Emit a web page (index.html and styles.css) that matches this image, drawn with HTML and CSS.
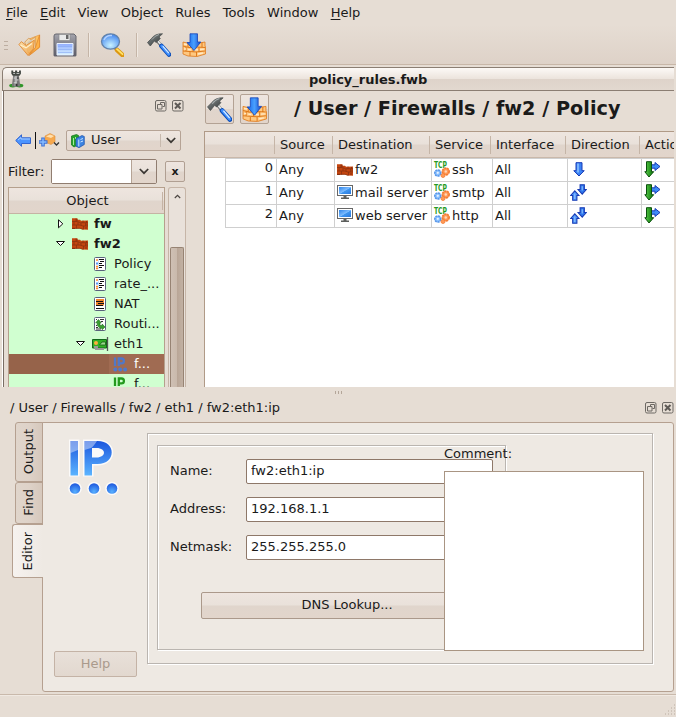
FILE: index.html
```html
<!DOCTYPE html>
<html lang="en">
<head>
<meta charset="utf-8">
<title>policy_rules.fwb</title>
<link rel="stylesheet" href="styles.css">
</head>
<body>
<svg class="sprite" width="0" height="0">
  <defs>
    <linearGradient id="blue" x1="0" y1="0" x2="0" y2="1"><stop offset="0" stop-color="#1c57de"/><stop offset="1" stop-color="#5bb4ff"/></linearGradient>
    <linearGradient id="blueH" x1="0" y1="0" x2="1" y2="0"><stop offset="0" stop-color="#1463e8"/><stop offset=".5" stop-color="#49a0ff"/><stop offset="1" stop-color="#1447c8"/></linearGradient>
    <linearGradient id="green" x1="0" y1="0" x2="1" y2="0"><stop offset="0" stop-color="#5bd04a"/><stop offset="1" stop-color="#087008"/></linearGradient>
    <linearGradient id="gold" x1="0" y1="0" x2="1" y2="1"><stop offset="0" stop-color="#ffe2a4"/><stop offset="1" stop-color="#f6982c"/></linearGradient>
    <linearGradient id="steel" x1="0" y1="0" x2="1" y2="1"><stop offset="0" stop-color="#8c9292"/><stop offset="1" stop-color="#2b3030"/></linearGradient>
    <linearGradient id="floppy" x1="0" y1="0" x2="0" y2="1"><stop offset="0" stop-color="#a5a5ad"/><stop offset="1" stop-color="#5b5b68"/></linearGradient>
    <linearGradient id="label" x1="0" y1="0" x2="0" y2="1"><stop offset="0" stop-color="#8fabff"/><stop offset="1" stop-color="#d8f2ff"/></linearGradient>
    <radialGradient id="lens" cx=".5" cy=".75" r=".75"><stop offset="0" stop-color="#c8f2ff"/><stop offset="1" stop-color="#3f82ee"/></radialGradient>
    <radialGradient id="ball" cx=".5" cy=".8" r=".8"><stop offset="0" stop-color="#57b0ff"/><stop offset="1" stop-color="#1b55dd"/></radialGradient>
    <linearGradient id="screen" x1="0" y1="0" x2="1" y2="1"><stop offset="0" stop-color="#2d83e8"/><stop offset=".5" stop-color="#7dbcff"/><stop offset=".55" stop-color="#3f96f0"/><stop offset="1" stop-color="#2a78dd"/></linearGradient>
  </defs>
  <symbol id="i-open" viewBox="0 0 24 24">
    <path d="M11 6l11.500-4.500v13L13 22z" fill="#ffc05c" stroke="#e59a44" stroke-width=".8"/>
    <path d="M7 9l4-4 3 1.500 4-3v12l-7 5z" fill="#efd6ae" stroke="#d49a58" stroke-width=".9"/>
    <path d="M10 9l4-2.500v10l-4 3z" fill="#cfc6b6"/>
    <path d="M1 11.500L3.500 8.500l5 4L17 7l-1 9-5.500 7z" fill="url(#gold)" fill-opacity=".8" stroke="#e08830" stroke-width=".9"/>
    <path d="M22.500 1.500v12.500L11.500 23l6.500-8z" fill="#ffb246" stroke="#e08830" stroke-width=".8"/>
    <path d="M2.500 12l6 3 6-4.500" fill="none" stroke="#fff0cc" stroke-width="1.200"/>
  </symbol>
  <symbol id="i-save" viewBox="0 0 24 24">
    <path d="M3 1h18l2 2v19.500q0 .5-.5.5h-21q-.5 0-.5-.5V3q0-2 2-2z" fill="url(#floppy)" stroke="#66666e"/>
    <path d="M6 1.500h11v5q0 1-1 1H7q-1 0-1-1z" fill="#e9e9e9" stroke="#888" stroke-width=".6"/>
    <path d="M13 2h2.500v4H13z" fill="#666"/>
    <path d="M4 10.500h16V22H4z" fill="url(#label)" stroke="#e9f2ff"/>
    <path d="M5 13.500h14M5 16.500h14M5 19.500h14" stroke="#86a8f4" stroke-width=".6"/>
  </symbol>
  <symbol id="i-find" viewBox="0 0 24 24">
    <path d="M15 15l3 3" stroke="#777" stroke-width="3"/>
    <path d="M17 17l5.500 5" stroke="#dd9812" stroke-width="4.500" stroke-linecap="round"/>
    <path d="M17 16.200l5.500 5" stroke="#ffe36c" stroke-width="1.800" stroke-linecap="round"/>
    <ellipse cx="10.500" cy="8.500" rx="9" ry="7.700" fill="url(#lens)" stroke="#6483a8" stroke-width="1.300"/>
    <path d="M4 7q2-5 8-4.500" stroke="#b2d2ff" stroke-width="1.500" fill="none"/>
  </symbol>
  <symbol id="i-hammer" viewBox="0 0 24 24">
    <path d="M9.500 7l5 6" stroke="#666" stroke-width="3"/><path d="M10 7l5 6" stroke="#e4e8e8" stroke-width="1.800"/>
    <path d="M14.500 13l7.500 8.500" stroke="#0b4bb4" stroke-width="4.600" stroke-linecap="round"/>
    <path d="M14.800 13l7 8.200" stroke="#3f8fff" stroke-width="3" stroke-linecap="round"/>
    <path d="M15.800 13.200l6 7" stroke="#d8edff" stroke-width="1.200"/>
    <path d="M.5 9.500L4.500 5.500Q8 .5 15.500.8l-3.500 3.200 1.300 1.500-4 4-2-1.500-4 5z" fill="url(#steel)" stroke="#434949" stroke-width=".7"/>
    <path d="M5 6.500q3-4 7-5" stroke="#a7afaf" fill="none"/>
  </symbol>
  <symbol id="i-install" viewBox="0 0 24 24">
    <path d="M1 9l6 1.500h8l8-1.500v4l.5 1v7L15 23.500l-9-.5L1 21z" fill="#ffc880" stroke="#de7a1c" stroke-width=".8"/>
    <path d="M1 13l6 1.500 8-.5 8 .5M1 18l13 1 9-1M6 9.500V14M4 14v4M11 14.500v4.500M17 14v5M20 9v5M8 19v4M14.500 19v4" stroke="#de7a1c" stroke-width="1" fill="none"/>
    <path d="M2 11l3 .5M2 16h2M6 16.500l3 .3M12 16.500l4 .3M18 16.500l4-.3M16 21l5-1" stroke="#ffe9c6" stroke-width="1.300"/>
    <path d="M8 .8h7.500V9h3.300L12 17.500 5 9.500h3z" fill="url(#blueH)" stroke="#1744b8" stroke-width=".8"/>
  </symbol>
  <symbol id="i-tower" viewBox="0 0 16 18">
    <ellipse cx="4" cy="16" rx="3.800" ry="2" fill="#2f9628"/><ellipse cx="11.500" cy="16" rx="3.800" ry="2" fill="#2f9628"/>
    <path d="M4.500 5h6l1.500 12H3z" fill="#777"/><path d="M6 5h2.500v12H6z" fill="#b5b5b5"/>
    <path d="M2.500 0h2v1.500h2V0h2.200v1.500h2V0h2v3.500L11.200 5.500h-7.200l-1.500-2z" fill="#414641"/>
    <path d="M4.500 3h2M8 3h3M5 8h2M8 10h2M5 13h3" stroke="#d2d2d2"/><path d="M7 14h2v3H7zM9 7h1v2H9z" fill="#333"/>
  </symbol>
  <symbol id="i-float" viewBox="0 0 12 12">
    <rect x=".5" y=".5" width="10.500" height="10.500" rx="1.500" fill="none" stroke="#6d6964"/>
    <path d="M5.500 4.500V2.500h4v4h-2M2.500 4.500h4.500v4.500H2.500z" fill="none" stroke="#6d6964"/>
  </symbol>
  <symbol id="i-close" viewBox="0 0 12 12">
    <rect x=".5" y=".5" width="10.500" height="10.500" rx="1.500" fill="none" stroke="#6d6964"/>
    <path d="M3 3l5.500 5.500M8.500 3L3 8.500" stroke="#5e5a56" stroke-width="2"/>
  </symbol>
  <symbol id="i-back" viewBox="0 0 16 13"><path d="M.7 6.500L6.500.8v3H15.500v5.700h-9v2.800z" fill="#4b94ff" stroke="#3465cf"/><path d="M3 6l3-2.500V5h9" fill="none" stroke="#a9cdff"/></symbol>
  <symbol id="i-newobj" viewBox="0 0 21 15">
    <path d="M6 3l5-2.500L16 3v6l-4 2.500L6 9z" fill="#f6a84e" stroke="#dd9140" stroke-width=".6"/><path d="M7 3.500l4-2 4 1.500-3 2z" fill="#ffe0ae"/>
    <path d="M4 4.500v9M-.5 9h9" stroke="#3a70d6" stroke-width="3.500"/><path d="M4 5.500v7M.5 9h7" stroke="#86bbff" stroke-width="1.500"/>
    <path d="M15 9.500l2.500 2.500L20 9.500" stroke="#333" stroke-width="1.300" fill="none"/>
  </symbol>
  <symbol id="i-books" viewBox="0 0 14 14">
    <path d="M.5 2l5-1.500 2 1v9L3 13 .5 11z" fill="#24a22a" stroke="#137218" stroke-width=".7"/><path d="M2.500 4v7M4.500 3v2" stroke="#a5eb9b"/>
    <path d="M5 4.500L11 1.500l2.300 1v8L8 13.700l-3-1.500z" fill="#3c83e2" stroke="#1c4fa8" stroke-width=".7"/><path d="M7.800 5.500v7M9.500 5.500l2.500-1M9.500 8l2.500-1" stroke="#cce5ff"/>
  </symbol>
  <symbol id="i-chev" viewBox="0 0 10 7"><path d="M.8 1l4.200 4.200L9.200 1" fill="none" stroke="#3b3733" stroke-width="1.700"/></symbol>
  <symbol id="i-up" viewBox="0 0 7 5"><path d="M.8 4l2.700-2.700L6.200 4" fill="none" stroke="#4c4642" stroke-width="1.200"/></symbol>
  <symbol id="i-tri-r" viewBox="0 0 10 10"><path d="M2.500 .8v8L6.800 4.800z" fill="#fff" stroke="#111"/></symbol>
  <symbol id="i-tri-d" viewBox="0 0 10 10"><path d="M.5 2.500h8L4.500 6.500z" fill="#fff" stroke="#111"/></symbol>
  <symbol id="i-wall" viewBox="0 0 16 12">
    <path d="M0 .3h5.500v1.500H8l1 1 7-.3v9.200l-5-.2-3-1-8 .2z" fill="#c4450f"/>
    <path d="M0 3.500h5.500l3 1.200h7.500M0 7h8l3 1h5M0 10.300h8l3 1M4 .5v3M2 3.500V7M6 4v3M11 2.500v2.200M9 5v2.300M13.500 5v3M4.500 7v3.500M11.500 8v3.500" stroke="#8a3210" stroke-width=".8" fill="none"/>
    <path d="M14.500 3v1.500M15 5.500v2M14 9v2M5 1v2M0 10.500h3" stroke="#7d2c0e" stroke-width=".8"/>
  </symbol>
  <symbol id="i-policy" viewBox="0 0 12 14"><rect x=".5" y=".5" width="11" height="13" rx="1" fill="#fff" stroke="#59627b"/><path d="M4.500 2v10" stroke="#cfe4ff"/><path d="M2 3h2M2 9.500h2M2 11.500h2" stroke="#ff8a2a" stroke-width="1.600"/><path d="M2 6.500h2" stroke="#569af3" stroke-width="2"/><path d="M5 2.500h5M6 4.500h4M5 6.500h3M5 8.500h5M5 10.500h3" stroke="#111"/></symbol>
  <symbol id="i-nat" viewBox="0 0 12 14"><rect x=".5" y=".5" width="11" height="13" rx="1" fill="#fff" stroke="#59627b"/><path d="M2 2h8v6.500H2z" fill="#f0842a"/><path d="M2 4.500h7M4 6.500h6M2 8.500h7M2 11.500h8" stroke="#111"/></symbol>
  <symbol id="i-routing" viewBox="0 0 12 14"><rect x=".5" y=".5" width="11" height="13" rx="1" fill="#fff" stroke="#59627b"/><path d="M6 2.500h4M2 8.500h1M2 10.500h2M7 4.500h2M2 2.500h1M2 12h5" stroke="#333"/><path d="M1.700 5.800L4.500 2.500l2.700 3.300H6V8.500h2.200V7L11 10l-2.800 2.700V11.300H6L3.300 8.500V5.800z" fill="#3aa030" stroke="#1a6d18" stroke-width=".6"/></symbol>
  <symbol id="i-nic" viewBox="0 0 17 14"><path d="M15.500 0v14" stroke="#555" stroke-width="1.300"/><path d="M.5 2.500h14v8.500H.5z" fill="#31b026" stroke="#12661a"/><circle cx="4" cy="6" r="2" fill="#ffaf3c"/><path d="M7.500 8l2.500-3h3.500v3z" fill="#9bd98e" stroke="#175c17" stroke-width=".8"/><path d="M2 10h4M3 12h9" stroke="#999" stroke-width="1.800"/></symbol>
  <symbol id="i-ip" viewBox="0 0 15 15"><path d="M2 .5V9M5.800 9V1.500h2.700a2.200 2.200 0 010 4.800h-2.500" fill="none" stroke="currentColor" stroke-width="2.300"/><circle cx="2.300" cy="12.500" r="2" fill="currentColor"/><circle cx="7.200" cy="12.500" r="2" fill="currentColor"/><circle cx="12.100" cy="12.500" r="2" fill="currentColor"/></symbol>
  <symbol id="i-host" viewBox="0 0 16 14"><rect x=".5" y=".5" width="15" height="10" fill="#fff" stroke="#666"/><path d="M2 2h12v7H2z" fill="url(#screen)"/><path d="M6.500 11h3v1.500h2.500V14H4v-1.500h2.500z" fill="#5d5f5d"/></symbol>
  <symbol id="i-tcp" viewBox="0 0 16 17" overflow="visible">
    <text x="0" y="7" class="tcp" textLength="13" lengthAdjust="spacingAndGlyphs">TCP</text>
    <circle cx="3.800" cy="12" r="3" fill="#8cc2ff" stroke="#5a98ea" stroke-width="1.600" stroke-dasharray="2.200 .6"/><circle cx="3.800" cy="11.800" r="1.100" fill="#e8f3ff"/>
    <circle cx="11.800" cy="10.500" r="3.400" fill="#ff9a58" stroke="#f47c34" stroke-width="1.600" stroke-dasharray="2.200 .6"/><circle cx="11.800" cy="10.500" r="1.200" fill="#ffd8ba"/>
    <circle cx="9" cy="14.500" r="2" fill="#ff9a58" stroke="#f47c34" stroke-width=".8"/>
  </symbol>
  <symbol id="i-down" viewBox="0 0 12 15"><path d="M3 .7h6v8h2.200L6 14 .8 8.700H3z" fill="#3b82f5" stroke="#173bb5"/><path d="M5 1.500v9" stroke="#91c5ff" stroke-width="1.500"/></symbol>
  <symbol id="i-both" viewBox="0 0 16 16"><path d="M9.500.7h4v4.500h1.900L11.500 9.500 7.600 5.200h1.900z" fill="#2f78ee" stroke="#173bb5"/><path d="M2.500 15.300h4v-4.500h1.900L4.500 6.500.6 10.800h1.900z" fill="#4c93f8" stroke="#173bb5"/><path d="M4.500 9v5M11.500 2v4" stroke="#93c5ff"/></symbol>
  <symbol id="i-accept" viewBox="0 0 17 17"><path d="M5 3.800h6V1.500l5 4-5 4V7.200H6z" fill="#3e8bf6" stroke="#173bb5"/><path d="M2.500.7h5v10h2.200L5 16 .8 10.700h1.700z" fill="url(#green)" stroke="#0a4f0c"/></symbol>
</svg>

<nav class="menubar">
  <span><u>F</u>ile</span><span><u>E</u>dit</span><span>View</span><span>Object</span><span>Rules</span><span>Tools</span><span>Window</span><span><u>H</u>elp</span>
</nav>

<div class="toolbar">
  <div class="handle"><i></i><i></i><i></i></div>
  <svg class="t-open"><use href="#i-open"/></svg>
  <svg class="t-save"><use href="#i-save"/></svg>
  <div class="sep"></div>
  <svg class="t-find"><use href="#i-find"/></svg>
  <div class="sep"></div>
  <svg class="t-hammer"><use href="#i-hammer"/></svg>
  <svg class="t-install"><use href="#i-install"/></svg>
</div>

<section class="document">
  <header class="titlebar"><svg class="tower"><use href="#i-tower"/></svg><b>policy_rules.fwb</b></header>
  <div class="workspace">
    <aside class="dock">
      <div class="dock-buttons"><svg><use href="#i-float"/></svg><svg><use href="#i-close"/></svg></div>
      <div class="library">
        <svg class="back"><use href="#i-back"/></svg><div class="caret"></div><svg class="newobj"><use href="#i-newobj"/></svg>
        <div class="select bevel"><svg class="books"><use href="#i-books"/></svg><span>User</span><div class="select-arrow"><svg class="chev"><use href="#i-chev"/></svg></div></div>
      </div>
      <div class="filter">
        <span>Filter:</span>
        <div class="combo"><div class="combo-text"></div><div class="combo-arrow bevel"><svg class="chev"><use href="#i-chev"/></svg></div></div>
        <button class="clear bevel">x</button>
      </div>
      <div class="tree-area">
        <div class="tree">
          <div class="tree-head bevel"><span>Object</span></div>
          <div class="node l1"><svg class="tri"><use href="#i-tri-r"/></svg><svg class="wall"><use href="#i-wall"/></svg><b>fw</b></div>
          <div class="node l1"><svg class="tri"><use href="#i-tri-d"/></svg><svg class="wall"><use href="#i-wall"/></svg><b>fw2</b></div>
          <div class="node l2"><svg class="page"><use href="#i-policy"/></svg><span>Policy</span></div>
          <div class="node l2"><svg class="page"><use href="#i-policy"/></svg><span>rate_...</span></div>
          <div class="node l2"><svg class="page"><use href="#i-nat"/></svg><span>NAT</span></div>
          <div class="node l2"><svg class="page"><use href="#i-routing"/></svg><span>Routi...</span></div>
          <div class="node l2b"><svg class="tri"><use href="#i-tri-d"/></svg><svg class="nic"><use href="#i-nic"/></svg><span>eth1</span></div>
          <div class="node l3 selected"><svg class="ip"><use href="#i-ip"/></svg><span>f...</span></div>
          <div class="node l3"><svg class="ip green"><use href="#i-ip"/></svg><span>f...</span></div>
        </div>
        <div class="scrollbar"><svg><use href="#i-up"/></svg><div class="thumb"></div></div>
      </div>
    </aside>
    <main class="rules">
      <div class="rules-head">
        <div class="tool bevel"><svg><use href="#i-hammer"/></svg></div>
        <div class="tool bevel"><svg><use href="#i-install"/></svg></div>
        <h1>/ User / Firewalls / fw2 / Policy</h1>
      </div>
      <div class="grid">
        <div class="grid-head bevel"><span></span><span>Source</span><span>Destination</span><span>Service</span><span>Interface</span><span>Direction</span><span>Action</span></div>
        <div class="row"><span class="num">0</span><span>Any</span><span><svg class="wall"><use href="#i-wall"/></svg>fw2</span><span><svg class="tcpicon"><use href="#i-tcp"/></svg>ssh</span><span>All</span><span><svg class="down"><use href="#i-down"/></svg></span><span><svg class="accept"><use href="#i-accept"/></svg></span></div>
        <div class="row"><span class="num">1</span><span>Any</span><span><svg class="host"><use href="#i-host"/></svg>mail server</span><span><svg class="tcpicon"><use href="#i-tcp"/></svg>smtp</span><span>All</span><span><svg class="both"><use href="#i-both"/></svg></span><span><svg class="accept"><use href="#i-accept"/></svg></span></div>
        <div class="row"><span class="num">2</span><span>Any</span><span><svg class="host"><use href="#i-host"/></svg>web server</span><span><svg class="tcpicon"><use href="#i-tcp"/></svg>http</span><span>All</span><span><svg class="both"><use href="#i-both"/></svg></span><span><svg class="accept"><use href="#i-accept"/></svg></span></div>
      </div>
    </main>
  </div>
</section>

<div class="splitter"><i></i><i></i><i></i></div>
<div class="editor-title"><span>/ User / Firewalls / fw2 / eth1 / fw2:eth1:ip</span><div class="dock-buttons"><svg><use href="#i-float"/></svg><svg><use href="#i-close"/></svg></div></div>

<section class="editor">
  <div class="tabs">
    <div class="tab output"><span>Output</span></div>
    <div class="tab find"><span>Find</span></div>
    <div class="tab active"><span>Editor</span></div>
  </div>
  <div class="pane">
    <div class="side">
      <svg class="ip-logo" viewBox="0 0 54 58">
        <g stroke="#fff" stroke-width="3" fill="#fff" opacity=".8"><path d="M3.500 1h7.500v34H3.500zM17.500 1h13c19 0 19 23 0 23h-5.500v11h-7.500z"/><circle cx="8" cy="48.500" r="5.300"/><circle cx="27" cy="48.500" r="5.300"/><circle cx="45" cy="48.500" r="5.300"/></g>
        <path d="M3.500 1H11v34.500H3.500z" fill="url(#blue)"/><path d="M17.500 1h13c19 0 19 23 0 23h-5.500v11.500h-7.500zM25 8v9.500h4.500c10 0 10-9.500 0-9.500z" fill="url(#blue)" fill-rule="evenodd"/>
        <path d="M3.500 1H11v9l-7.500 3zM17.500 1h12.500q-4 6-6 7l-6.500 2z" fill="#fff" opacity=".42"/>
        <circle cx="8" cy="48.500" r="5.300" fill="url(#ball)"/><circle cx="27" cy="48.500" r="5.300" fill="url(#ball)"/><circle cx="45" cy="48.500" r="5.300" fill="url(#ball)"/>
      </svg>
      <button class="help">Help</button>
    </div>
    <div class="frame outer">
      <div class="frame inner">
        <label><span>Name:</span><input value="fw2:eth1:ip"></label>
        <label><span>Address:</span><input value="192.168.1.1"></label>
        <label><span>Netmask:</span><input value="255.255.255.0"></label>
        <button class="lookup bevel">DNS Lookup...</button>
      </div>
      <div class="comment"><span>Comment:</span><textarea></textarea></div>
    </div>
  </div>
</section>

<footer class="status">
  <svg class="grip" viewBox="0 0 12 12"><path d="M10 1h1M7 4h1M10 4h1M4 7h1M7 7h1M10 7h1M1 10h1M4 10h1M7 10h1M10 10h1" stroke="#b9aca0"/></svg>
</footer>
</body>
</html>
```
FILE: styles.css
```css
* { box-sizing: border-box; }
body {
  margin: 0; width: 676px; height: 717px; overflow: hidden;
  display: flex; flex-direction: column;
  background: #e6ddd4; color: #1a1a1a;
  font: 13px/16px "DejaVu Sans", sans-serif;
}
svg { display: block; flex: none; overflow: visible; }
.sprite { position: absolute; }
button, input, textarea { font: inherit; color: inherit; outline: none; padding: 0; margin: 0; }
.bevel { background: linear-gradient(#eee5df, #e9e1da 49%, #e0d5cc 51%, #e2d5cb); }
.tcp { font: bold 8px "DejaVu Sans", sans-serif; fill: #259a22; }

.menubar { height: 25px; flex: none; display: flex; gap: 12.3px; padding: 5px 6px 0; }
.menubar u { text-underline-offset: 2px; }

.toolbar { height: 40px; flex: none; display: flex; align-items: center; background: linear-gradient(#e6ddd4, #ded2c8); border-bottom: 1px solid #c8b7a8; }
.handle { display: flex; flex-direction: column; gap: 3px; margin: 1px 10px 0 4px; }
.handle i { width: 4px; height: 1px; background: #bdaea1; }
.t-open, .t-save, .t-find, .t-hammer, .t-install { width: 24px; height: 24px; }
.t-open { width: 23px; margin-right: 11px; }
.t-save { margin: 0 11px 0 1px; }
.sep { width: 1px; height: 24px; background: #c5b5a7; box-shadow: 1px 0 #f0e9e2; }
.t-find { margin: 0 12px 0 11px; }
.t-hammer { margin: 0 11px 0 10px; }

.document { height: 320px; flex: none; margin: 2px 2px 0; overflow: hidden; }
.titlebar {
  height: 24px; display: flex; align-items: center; padding-left: 6px;
  border: 1px solid #8b7e73; border-width: 1px 0 1px 1px; border-radius: 5px 0 0;
  background: linear-gradient(#fcf9f6, #ece4dd 48%, #ded3ca 52%, #e2d8cf);
}
.tower { width: 15px; height: 18px; }
.titlebar b { margin: 1px 0 0 285px; }
.workspace { height: 296px; display: flex; border-left: 1px solid #fff; box-shadow: inset 1px 0 #796d64; }
.dock { width: 201px; flex: none; padding-left: 5px; }
.dock-buttons { display: flex; gap: 5px; }
.dock-buttons svg { width: 12px; height: 12px; }
.dock .dock-buttons { padding: 9px 0 0 147px; height: 39px; }
.library { height: 21px; display: flex; align-items: center; padding-left: 7px; }
.back { width: 16px; height: 13px; }
.caret { width: 1px; height: 17px; background: #111; margin: 0 3px 0 4px; }
.newobj { width: 21px; height: 15px; }
.select { width: 115px; height: 21px; margin-left: 6px; display: flex; align-items: center; border: 1px solid #b5a395; border-radius: 2px; }
.select span { margin-top: -2px; }
.books { width: 14px; height: 14px; margin: 0 6px 0 4px; }
.select-arrow { margin-left: auto; width: 20px; height: 13px; border-left: 1px solid #c7b9ad; display: flex; align-items: center; justify-content: center; }
.chev { width: 10px; height: 7px; }
.filter { height: 25px; margin-top: 8px; display: flex; align-items: center; }
.filter > span { width: 43px; }
.combo { display: flex; width: 106px; height: 25px; border: 1px solid #907d70; border-radius: 2px; }
.combo-text { flex: 1; background: #fff; }
.combo-arrow { width: 25px; border-left: 1px solid #b5a395; display: flex; align-items: center; justify-content: center; }
.clear { width: 20px; height: 21px; margin-left: 8px; border: 1px solid #b09f92; border-radius: 2px; font: bold 11px/14px "DejaVu Sans", sans-serif; }
.tree-area { display: flex; gap: 3px; margin-top: 3px; height: 200px; }
.tree { width: 157px; border: 1px solid #b5a08d; border-bottom: 0; background: #d0ffd0; overflow: hidden; }
.tree-head { height: 26px; padding: 4px 0 5px; text-align: center; border-bottom: 1px solid #c5b3a4; }
.tree-head span { display: block; height: 18px; border-right: 1px solid #c5b3a4; margin-right: 1px; padding-left: 4px; line-height: 18px; }
.node { height: 20px; display: flex; align-items: center; }
.l1 { padding-left: 47px; }
.l2 { padding-left: 85px; }
.l2b { padding-left: 67px; }
.l3 { padding-left: 104px; }
.tri { width: 10px; height: 10px; margin-right: 6px; }
.wall { width: 16px; height: 12px; }
.node .wall { margin-right: 6px; }
.page { width: 12px; height: 14px; margin-right: 8px; }
.nic { width: 17px; height: 14px; margin-right: 5px; }
.ip { width: 15px; height: 15px; margin-right: 6px; color: #5078c8; }
.ip.green { color: #239a1e; }
.selected { background: linear-gradient(90deg, #96634a 100px, #a06b52 100px); color: #fff; }
.scrollbar { width: 18px; border: 1px solid #c6b5a7; border-bottom: 0; border-radius: 3px 3px 0 0; background: #e9e1da; display: flex; flex-direction: column; align-items: center; padding-top: 6px; }
.scrollbar svg { width: 7px; height: 5px; }
.thumb { width: 14px; flex: 1; margin-top: 48px; border: 1px solid #978373; border-bottom: 0; border-radius: 2px 2px 0 0; background: linear-gradient(90deg, #cfc0b4, #c9b9ac 50%, #b9a697 52%, #c2b1a3); }

.rules { flex: 1; min-width: 0; }
.rules-head { height: 40px; display: flex; padding: 3px 0 0 1px; }
.tool { width: 29px; height: 30px; margin-right: 6px; border: 1px solid #b3a294; border-radius: 2px; padding: 2px 1px; }
.tool svg { width: 25px; height: 25px; }
h1 { font-size: 19.25px; line-height: 24px; margin: 3px 0 0 19px; white-space: nowrap; }
.grid { height: 256px; background: #fff; border: 1px solid #b09a87; border-width: 1px 0 0 1px; }
.grid-head { height: 26px; display: grid; grid-template-columns: 70px 58px 97px 61px 75px 74px 1fr; align-items: center; border-bottom: 1px solid #c9b8aa; overflow: hidden; }
.grid-head span { height: 18px; line-height: 18px; padding-left: 5px; border-right: 1px solid #c5b5a7; }
.row { margin-left: 20px; height: 23px; display: grid; grid-template-columns: 51px 58px 97px 61px 75px 74px 1fr; border-bottom: 1px solid #cfcfcf; border-left: 1px solid #cfcfcf; overflow: hidden; }
.row:nth-child(2) { height: 24px; border-top: 1px solid #cfcfcf; }
.row > span { display: flex; align-items: center; padding-left: 2px; gap: 2px; border-right: 1px solid #cfcfcf; white-space: nowrap; }
.row > span:last-child, .grid-head span:last-child { border-right: 0; }
.row .num { justify-content: flex-end; padding: 0 3px 5px 0; }
.host { width: 16px; height: 14px; margin-bottom: 2px; }
.tcpicon { width: 16px; height: 17px; margin-bottom: 1px; }
.down { width: 12px; height: 15px; margin: 0 0 2px 3px; }
.both, .accept { width: 17px; height: 17px; margin-bottom: 2px; }

.splitter { height: 12px; flex: none; display: flex; gap: 2px; justify-content: center; padding-top: 4px; }
.splitter i { width: 1px; height: 3px; background: #b4a699; }
.editor-title { height: 23px; flex: none; display: flex; justify-content: space-between; padding: 0 2px 0 10px; }
.editor-title > span { padding-top: 1px; letter-spacing: -.02px; }
.editor-title .dock-buttons { padding-top: 3px; }

.editor { height: 270px; flex: none; display: flex; padding: 0 2px 0 12px; }
.tabs { width: 31px; margin-right: -1px; z-index: 1; display: flex; flex-direction: column; align-items: flex-end; }
.tab { width: 28px; border: 1px solid #b5a090; border-radius: 3px 0 0 3px; display: flex; align-items: center; justify-content: center; background: linear-gradient(90deg, #e0d5cb, #ded2c8 50%, #d6c8bc); }
.tab span { writing-mode: vertical-rl; transform: rotate(180deg); }
.output { height: 60px; }
.find { height: 42px; }
.find span { margin-bottom: 2px; }
.active { width: 31px; height: 54px; border-right: 0; background: linear-gradient(90deg, #f6f2ef, #eee9e3); }
.pane { flex: 1; display: flex; background: #eee9e3; border: 1px solid #b5a090; border-radius: 0 3px 3px; }
.side { width: 104px; padding: 17px 0 0 11px; display: flex; flex-direction: column; }
.ip-logo { width: 54px; height: 58px; margin-left: 13px; }
.help { width: 83px; height: 26px; margin-top: 153px; border: 1px solid #c4b3a6; border-radius: 2px; background: linear-gradient(#e8e0d9, #e2d8cf); color: #aa9a8c; }
.frame { border: 1px solid #bab5b0; box-shadow: 1px 1px #fff, inset 1px 1px #fff; }
.outer { width: 506px; height: 231px; margin-top: 10px; padding: 11px 9px; position: relative; }
.inner { width: 349px; height: 205px; padding: 13px 12px; }
.inner label { display: flex; align-items: center; height: 25px; margin-bottom: 13px; }
.inner label span { width: 76px; margin-top: -2px; }
.inner input { width: 247px; height: 25px; border: 1px solid #8e7869; border-radius: 2px; background: #fff; padding: 0 0 2px 4px; }
.lookup { display: block; width: 292px; height: 27px; margin: 32px 0 0 31px; padding-bottom: 2px; border: 1px solid #ab998b; border-radius: 2px; }
.comment { position: absolute; left: 296px; top: 11px; }
.comment span { display: block; height: 26px; padding-top: 1px; }
.comment textarea { display: block; width: 200px; height: 180px; resize: none; background: #fff; border: 1px solid #a99583; }

.status { flex: 1; margin-top: 2px; border-top: 1px solid #c9b9ab; box-shadow: inset 0 1px #f0e9e2; display: flex; align-items: flex-end; justify-content: flex-end; padding: 0 0 1px; }
.grip { width: 12px; height: 12px; }
```
